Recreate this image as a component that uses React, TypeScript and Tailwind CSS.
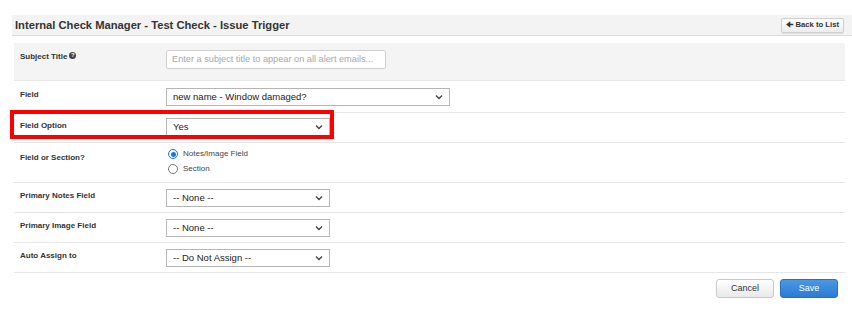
import React from 'react';

const font = { fontFamily: '"Liberation Sans", Arial, sans-serif' };

function Chevron() {
  return (
    <svg width="8" height="6" viewBox="0 0 8 6" className="shrink-0">
      <path d="M1 1.5 L4 4.5 L7 1.5" fill="none" stroke="#444" strokeWidth="1.4" />
    </svg>
  );
}

function FakeSelect({ value, width }: { value: string; width: string }) {
  return (
    <div
      className={`${width} h-[18px] flex items-center justify-between border border-[#b5b5b5] bg-white pl-[6px] pr-[6px] text-[9.5px] text-[#222]`}
    >
      <span>{value}</span>
      <Chevron />
    </div>
  );
}

function Row({
  label,
  children,
  className = '',
}: {
  label: React.ReactNode;
  children: React.ReactNode;
  className?: string;
}) {
  return (
    <div className={`flex border-t border-[#e6e6e6] ${className}`}>
      <div className="w-[152px] shrink-0 pl-[6px] text-[8px] font-bold text-[#333]">{label}</div>
      <div>{children}</div>
    </div>
  );
}

export default function App() {
  const rows = [
    { label: 'Primary Notes Field', value: '-- None --' },
    { label: 'Primary Image Field', value: '-- None --' },
    { label: 'Auto Assign to', value: '-- Do Not Assign --' },
  ];

  return (
    <div className="relative w-[852px] h-[321px] bg-white" style={font}>
      <div className="pt-[15px] pl-[12px]">
        <div className="h-[21px] flex items-center justify-between bg-[#f3f3f3] border-b border-[#dcdcdc] pl-[3px] pr-[8px]">
          <h1 className="text-[11.2px] font-bold text-[#333]">
            Internal Check Manager - Test Check - Issue Trigger
          </h1>
          <button className="h-[15px] px-[4px] flex items-center gap-[2px] rounded-[2px] border border-[#cfcfcf] bg-gradient-to-b from-white to-[#ececec] text-[7.7px] font-bold text-[#333] shadow-[0_1px_1px_rgba(0,0,0,0.08)]">
            <span className="text-[8px] leading-none">&#129032;</span>
            Back to List
          </button>
        </div>
      </div>

      <div className="ml-[14px] mr-[7px] mt-[7px]">
        <div className="h-[37px] flex bg-[#f4f4f4] pt-[7px]">
          <div className="w-[152px] shrink-0 pl-[6px] pt-[1px] text-[8px] font-bold text-[#333] flex items-start gap-[2px]">
            Subject Title
            <span className="mt-[1px] inline-flex w-[7px] h-[7px] rounded-full bg-[#444] text-white text-[6px] leading-[7px] justify-center">?</span>
          </div>
          <div className="w-[220px] h-[19px] border border-[#cfcfcf] rounded-[2px] bg-white pl-[5px] flex items-center text-[9.2px] text-[#a8a8a8]">
            Enter a subject title to appear on all alert emails...
          </div>
        </div>

        <Row label={<div className="pt-[1px]">Field</div>} className="h-[32px] pt-[7px]">
          <FakeSelect value="new name - Window damaged?" width="w-[284px]" />
        </Row>

        <Row label={<div className="pt-[2px]">Field Option</div>} className="h-[30px] pt-[5px]">
          <FakeSelect value="Yes" width="w-[164px]" />
        </Row>

        <Row label={<div className="pt-[4px]">Field or Section?</div>} className="h-[40px] pt-[5px]">
          <div className="flex flex-col gap-[3px] pl-[2px] text-[8px] text-[#444]">
            <label className="flex items-center gap-[5px]">
              <span className="w-[10px] h-[10px] rounded-full border-[1.5px] border-[#1a73e8] flex items-center justify-center">
                <span className="w-[5px] h-[5px] rounded-full bg-[#1a73e8]" />
              </span>
              Notes/Image Field
            </label>
            <label className="flex items-center gap-[5px]">
              <span className="w-[10px] h-[10px] rounded-full border border-[#777] bg-white" />
              Section
            </label>
          </div>
        </Row>

        {rows.map((r) => (
          <Row key={r.label} label={<div className="pt-[1px]">{r.label}</div>} className="h-[30px] pt-[6px]">
            <FakeSelect value={r.value} width="w-[164px]" />
          </Row>
        ))}

        <div className="border-t border-[#e6e6e6] flex justify-end gap-[6px] pt-[6px] pr-[7px]">
          <button className="w-[58px] h-[19px] rounded-[3px] border border-[#c8c8c8] bg-gradient-to-b from-white to-[#e9e9e9] text-[9px] text-[#333]">
            Cancel
          </button>
          <button className="w-[58px] h-[19px] rounded-[3px] border border-[#2a70c2] bg-gradient-to-b from-[#4a98e4] to-[#2b7bd3] text-[9px] text-white">
            Save
          </button>
        </div>
      </div>

      <div className="absolute left-[10px] top-[110px] w-[324px] h-[29px] border-[4px] border-[#ff0000]" />
    </div>
  );
}
